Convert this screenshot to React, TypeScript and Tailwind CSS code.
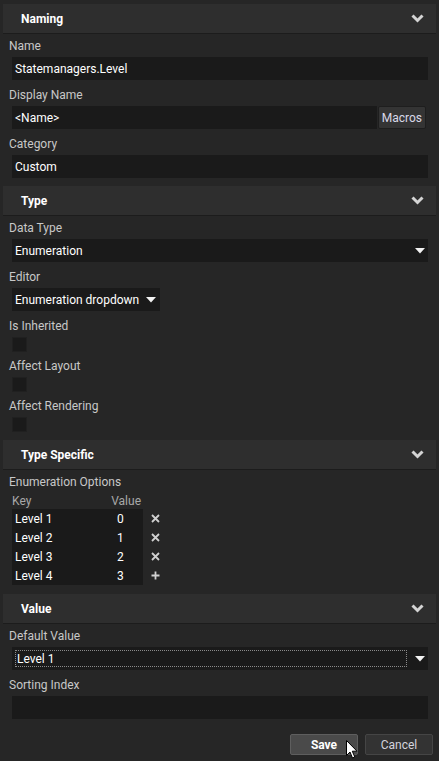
import type { ReactNode } from 'react';

const font = { fontFamily: 'Roboto, "Noto Sans", sans-serif' };

function Chevron() {
  return (
    <svg width="13" height="9" viewBox="0 0 13 9" className="text-[#d4d4d4]">
      <polyline points="1.5,1.5 6.5,6.5 11.5,1.5" fill="none" stroke="currentColor" strokeWidth="3" />
    </svg>
  );
}

function Triangle() {
  return (
    <svg width="10" height="6" viewBox="0 0 10 6">
      <polygon points="0,0 10,0 5,5.5" fill="#f2f2f2" />
    </svg>
  );
}

function SectionHeader({ title }: { title: string }) {
  return (
    <div className="mx-[3px] flex h-[30px] items-center justify-between border-b border-[#1c1c1c] bg-[#2e2e2e] pl-[18px] pr-[12px]">
      <span className="text-[12px] font-bold text-white">{title}</span>
      <Chevron />
    </div>
  );
}

function Label({ children }: { children: ReactNode }) {
  return <div className="flex h-[23px] items-center pl-[9px] text-[12px] text-[#c8c8c8]">{children}</div>;
}

function TextBox({ value }: { value?: string }) {
  return (
    <div className="ml-[12px] mr-[11px] flex h-[23px] items-center bg-[#1a1a1a] px-[3px] text-[12px] text-white">
      {value}
    </div>
  );
}

function CheckField({ label }: { label: string }) {
  return (
    <div className="mb-[2px]">
      <Label>{label}</Label>
      <div className="ml-[12px] h-[15px] w-[15px] border border-[#202020] bg-[#1a1a1a]" />
    </div>
  );
}

const options = [
  { key: 'Level 1', value: '0', icon: 'x' },
  { key: 'Level 2', value: '1', icon: 'x' },
  { key: 'Level 3', value: '2', icon: 'x' },
  { key: 'Level 4', value: '3', icon: '+' },
];

function RowIcon({ kind }: { kind: string }) {
  return (
    <svg width="9" height="9" viewBox="0 0 9 9" className="text-[#d0d0d0]">
      {kind === 'x' ? (
        <path d="M1 1 L8 8 M8 1 L1 8" stroke="currentColor" strokeWidth="1.8" />
      ) : (
        <path d="M4.5 0.5 V8.5 M0.5 4.5 H8.5" stroke="currentColor" strokeWidth="1.8" />
      )}
    </svg>
  );
}

export default function App() {
  return (
    <div className="relative h-[761px] w-[439px] overflow-hidden bg-[#262626] pt-[4px]" style={font}>
      {/* Naming */}
      <SectionHeader title="Naming" />
      <div className="flex flex-col gap-[3px] pb-[8px]">
        <div>
          <Label>Name</Label>
          <TextBox value="Statemanagers.Level" />
        </div>
        <div>
          <Label>Display Name</Label>
          <div className="ml-[12px] mr-[13px] flex h-[23px] items-stretch gap-[1px]">
            <div className="flex flex-1 items-center bg-[#1a1a1a] px-[3px] text-[12px] text-white">&lt;Name&gt;</div>
            <button className="rounded-[2px] border border-[#1e1e1e] bg-[#343434] px-[3px] text-[12px] text-[#d8d8e8]">
              Macros
            </button>
          </div>
        </div>
        <div>
          <Label>Category</Label>
          <TextBox value="Custom" />
        </div>
      </div>

      {/* Type */}
      <SectionHeader title="Type" />
      <div className="flex flex-col pb-[8px]">
        <Label>Data Type</Label>
        <div className="ml-[12px] mr-[11px] flex h-[23px] items-center justify-between bg-[#1a1a1a] pl-[3px] pr-[3px] text-[12px] text-white">
          <span>Enumeration</span>
          <Triangle />
        </div>
        <div className="mt-[3px]">
          <Label>Editor</Label>
          <div className="ml-[12px] flex h-[23px] w-[148px] items-center justify-between whitespace-nowrap bg-[#1a1a1a] pl-[3px] pr-[4px] text-[12px] text-white">
            <span>Enumeration dropdown</span>
            <Triangle />
          </div>
        </div>
        <div className="mt-[3px]">
          <CheckField label="Is Inherited" />
          <CheckField label="Affect Layout" />
          <div>
            <Label>Affect Rendering</Label>
            <div className="ml-[12px] h-[15px] w-[15px] border border-[#202020] bg-[#1a1a1a]" />
          </div>
        </div>
      </div>

      {/* Type Specific */}
      <SectionHeader title="Type Specific" />
      <div className="pb-[9px]">
        <Label>Enumeration Options</Label>
        <div className="ml-[12px] flex h-[16px] w-[131px] items-center text-[12px] text-[#a8a8a8]">
          <span className="flex-1">Key</span>
          <span className="pr-[2px]">Value</span>
        </div>
        <div className="flex">
          <div className="ml-[12px] w-[131px] bg-[#1a1a1a]">
            {options.map((o) => (
              <div key={o.key} className="flex h-[19px] items-center text-[12px] text-white">
                <span className="w-[105px] pl-[3px]">{o.key}</span>
                <span>{o.value}</span>
              </div>
            ))}
          </div>
          <div className="ml-[8px]">
            {options.map((o) => (
              <div key={o.key} className="flex h-[19px] items-center">
                <RowIcon kind={o.icon} />
              </div>
            ))}
          </div>
        </div>
      </div>

      {/* Value */}
      <SectionHeader title="Value" />
      <div className="flex flex-col">
        <Label>Default Value</Label>
        <div className="ml-[12px] mr-[11px] flex h-[23px] items-center bg-[#1a1a1a] pl-[3px] pr-[3px] text-[12px] text-white">
          <div className="flex h-[17px] flex-1 items-center border border-dotted border-[#8a8a8a] pl-[1px]">Level 1</div>
          <div className="ml-[8px]">
            <Triangle />
          </div>
        </div>
        <div className="mt-[3px]">
          <Label>Sorting Index</Label>
          <TextBox />
        </div>
        <div className="mt-[15px] flex justify-end gap-[7px] pr-[6px]">
          <button className="h-[21px] w-[68px] rounded-[2px] border border-[#5e5e5e] bg-[#4a4a4a] text-[12px] font-bold text-white">
            Save
          </button>
          <button className="h-[21px] w-[68px] rounded-[2px] border border-[#454545] bg-[#333333] text-[12px] text-[#d4d4dc]">
            Cancel
          </button>
        </div>
      </div>

      {/* mouse cursor over Save */}
      <svg className="absolute left-[346px] top-[740px]" width="12" height="19" viewBox="0 0 12 19">
        <path d="M0.5 0.5 V15.5 L4 12 L6.5 18 L8.8 17 L6.3 11.2 H11 Z" fill="white" stroke="black" strokeWidth="1" />
      </svg>
    </div>
  );
}
